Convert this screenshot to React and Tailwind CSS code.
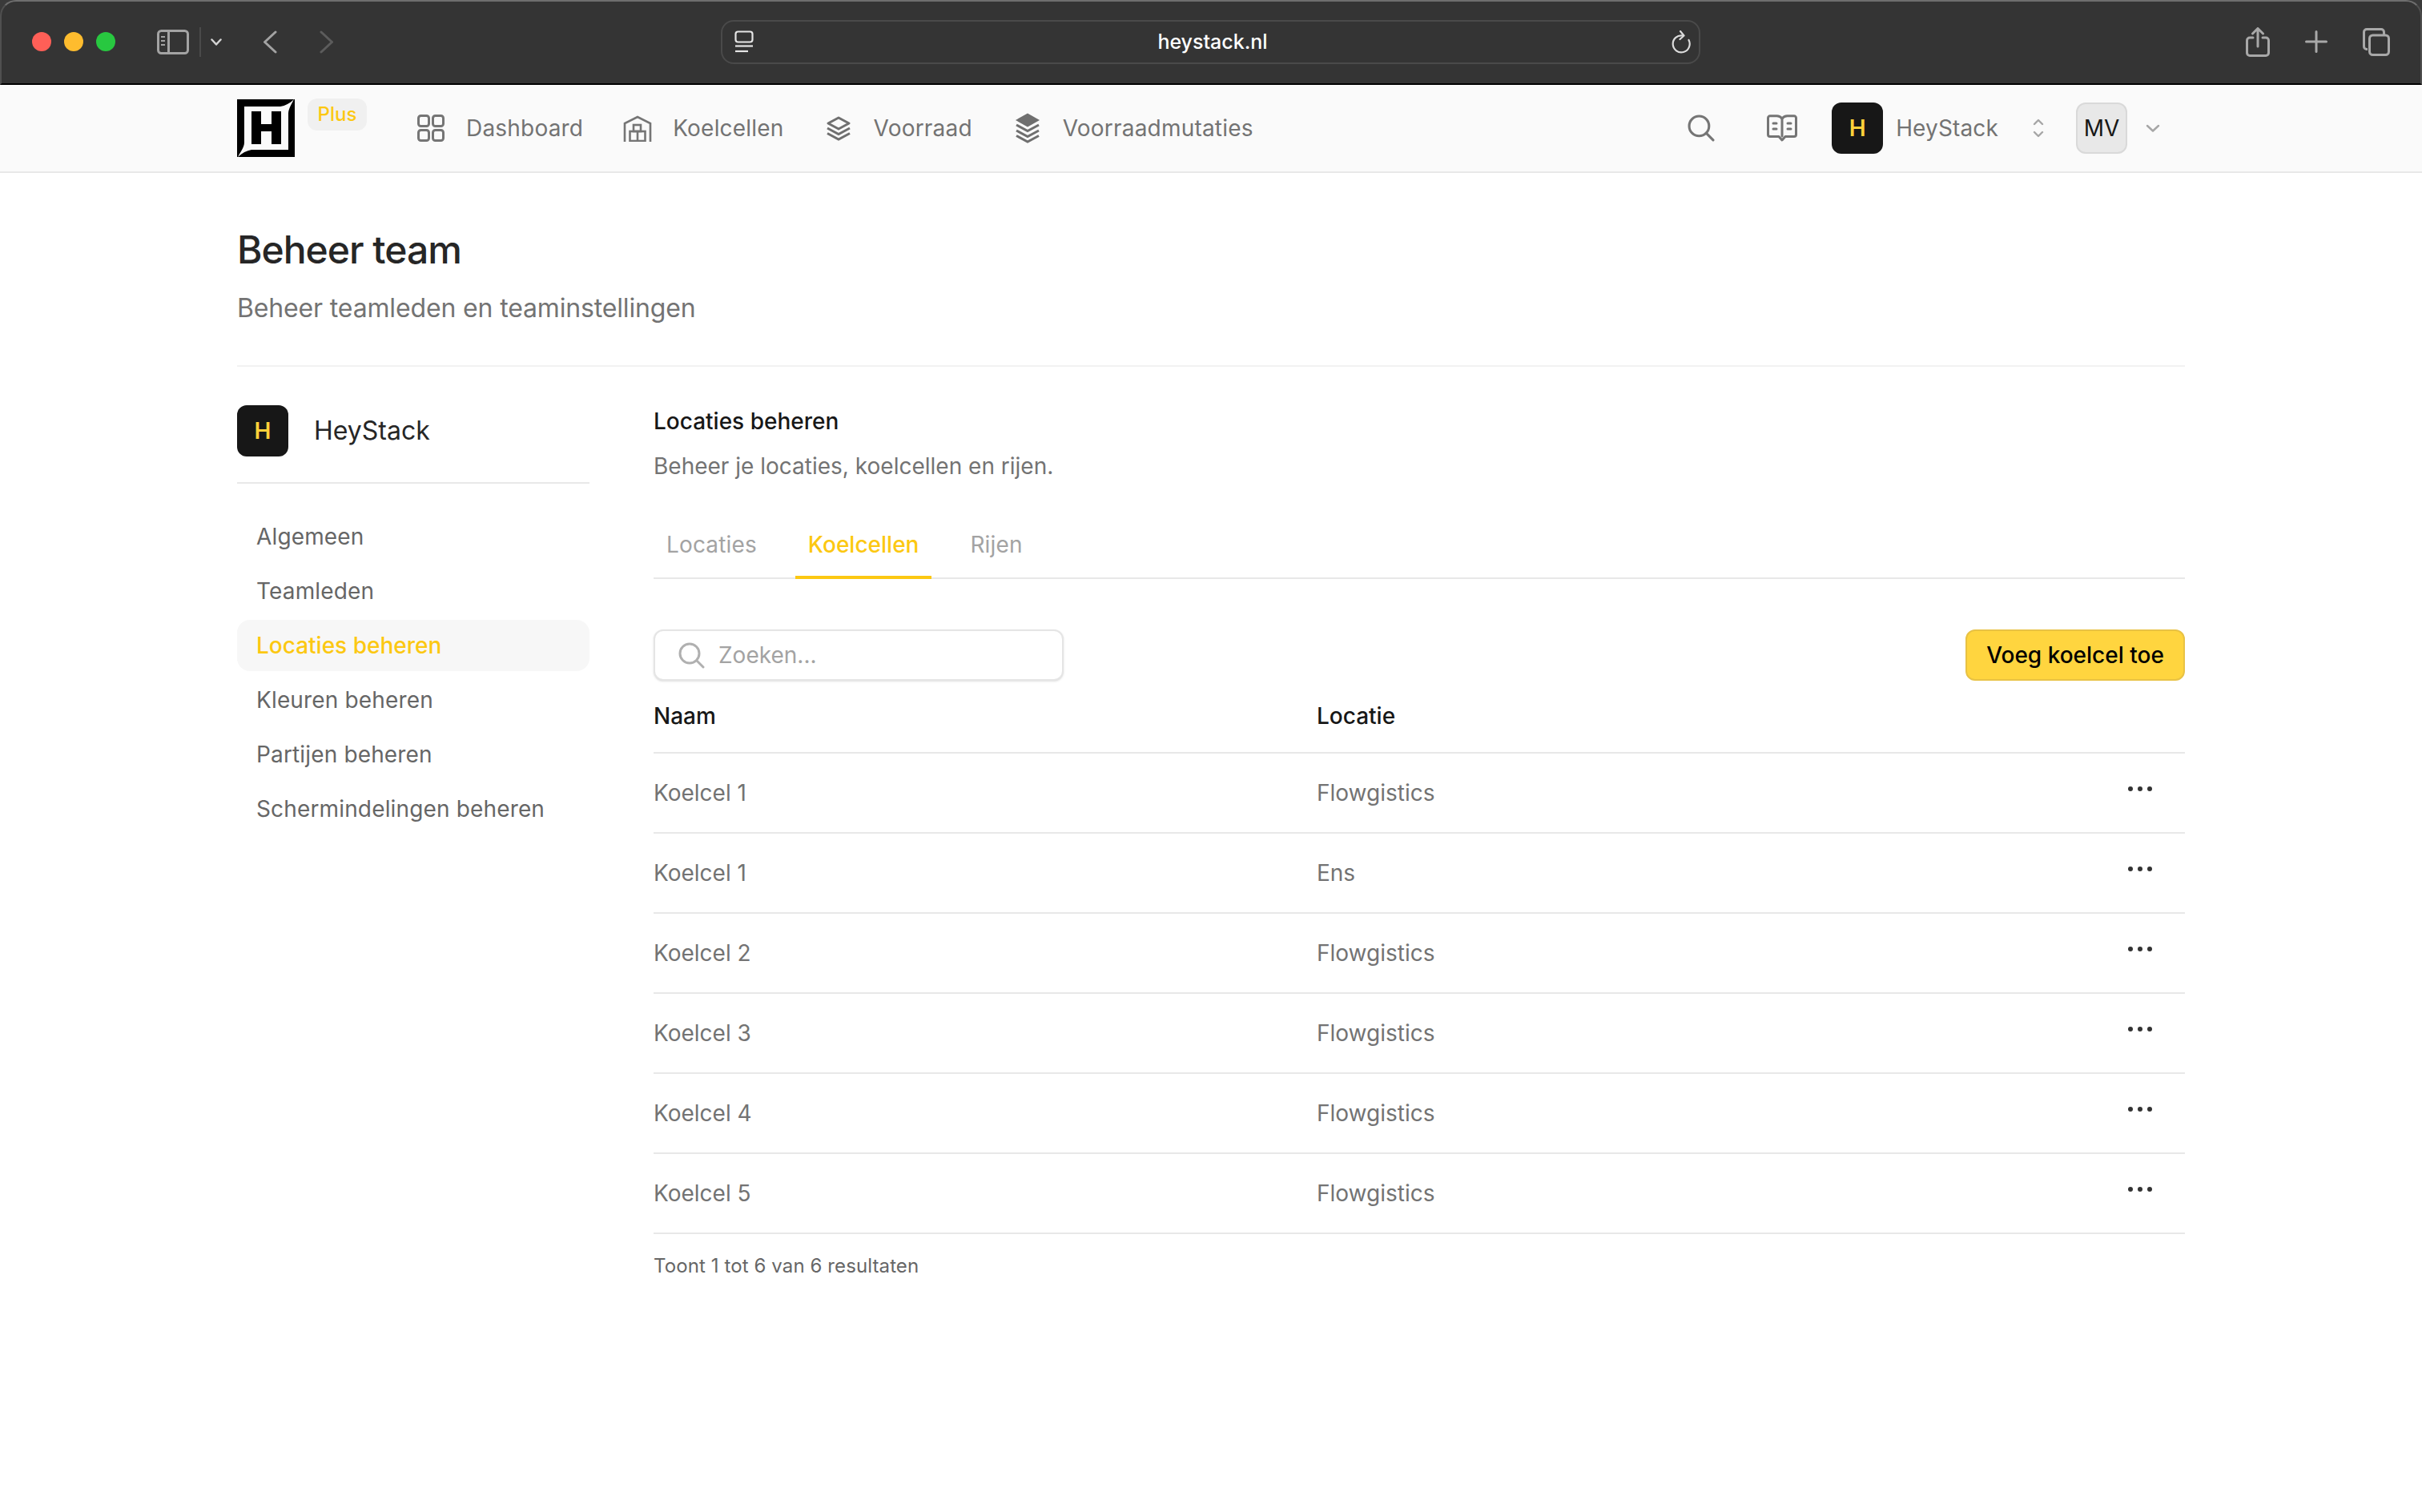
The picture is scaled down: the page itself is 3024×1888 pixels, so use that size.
import React from 'react';

const tableRows = [
    ['Koelcel 1', 'Flowgistics'],
    ['Koelcel 1', 'Ens'],
    ['Koelcel 2', 'Flowgistics'],
    ['Koelcel 3', 'Flowgistics'],
    ['Koelcel 4', 'Flowgistics'],
    ['Koelcel 5', 'Flowgistics'],
];

const sideLinks = ['Algemeen', 'Teamleden', 'Locaties beheren', 'Kleuren beheren', 'Partijen beheren', 'Schermindelingen beheren'];

function Logo() {
    return (
        <svg width="72" height="72" viewBox="0 0 72 72" className="shrink-0">
            <rect width="72" height="72" fill="#000" />
            <path d="M9 9H54C60 8 66 5 71 0C68 6 64 12 64 18V63H18C12 64 6 67 1 72C4 66 9 60 9 54Z" fill="#fafafa" />
            <path d="M18 15H30V31H43V15H55V56H43V40H30V56H18Z" fill="#000" />
        </svg>
    );
}

function GridIcon() {
    return (
        <svg width="34" height="34" viewBox="0 0 34 34" fill="none" stroke="#757575" strokeWidth="3">
            <rect x="1.5" y="1.5" width="13" height="13" rx="3" />
            <rect x="19.5" y="1.5" width="13" height="13" rx="3" />
            <rect x="1.5" y="19.5" width="13" height="13" rx="3" />
            <rect x="19.5" y="19.5" width="13" height="13" rx="3" />
        </svg>
    );
}

function WarehouseIcon() {
    return (
        <svg width="36" height="33" viewBox="0 0 36 33" fill="none" stroke="#757575" strokeWidth="2.6">
            <path d="M2 33V10L18 2L34 10V33" />
            <rect x="8.5" y="20" width="19" height="12" />
            <path d="M18 20V32" />
            <rect x="13" y="12" width="9" height="8" />
        </svg>
    );
}

function LayersIcon() {
    return (
        <svg width="32" height="31" viewBox="0 0 32 31" fill="none" stroke="#6f6f6f" strokeWidth="3">
            <path d="M16 2L29 9L16 16L3 9Z" strokeLinejoin="round" />
            <path d="M2 15L16 22.5L30 15" />
            <path d="M2 21.5L16 29L30 21.5" />
        </svg>
    );
}

function StackIcon() {
    return (
        <svg width="32" height="38" viewBox="0 0 32 38" fill="none" stroke="#6f6f6f" strokeWidth="3">
            <path d="M16 0.5L31 9L16 17.5L1 9Z" fill="#6f6f6f" stroke="none" />
            <path d="M2 15L16 22.5L30 15" />
            <path d="M2 22L16 29.5L30 22" />
            <path d="M2 28.5L16 36L30 28.5" />
        </svg>
    );
}

function SearchIcon({ color, size }) {
    return (
        <svg width={size} height={size} viewBox="0 0 33 33" fill="none" stroke={color} strokeWidth="3" strokeLinecap="round">
            <circle cx="14" cy="14" r="12" />
            <path d="M23 23L31 31" />
        </svg>
    );
}

function BookIcon() {
    return (
        <svg width="38" height="34" viewBox="0 0 38 34" fill="none" stroke="#757575" strokeWidth="3" strokeLinecap="round" strokeLinejoin="round">
            <path d="M19 5C17.5 3 15 1.8 12.5 1.8H4a2.5 2.5 0 0 0-2.5 2.5V25A2.5 2.5 0 0 0 4 27.5H15L19 32L23 27.5H34A2.5 2.5 0 0 0 36.5 25V4.300A2.500 2.500 0 0 0 34 1.800H25.500C23 1.800 20.500 3 19 5Z" />
            <path d="M19 5V27" />
            <path d="M8 11H12M8 18H12M26 11H30M26 18H30" />
        </svg>
    );
}

function UpDownIcon() {
    return (
        <svg width="14" height="24" viewBox="0 0 14 24" fill="none" stroke="#a6a6a6" strokeWidth="2.4" strokeLinecap="round" strokeLinejoin="round">
            <path d="M2 7L7 2L12 7" />
            <path d="M2 17L7 22L12 17" />
        </svg>
    );
}

function TrafficLights() {
    return (
        <div className="flex gap-4">
            <div className="w-6 h-6 rounded-full bg-[#ff5f57]" />
            <div className="w-6 h-6 rounded-full bg-[#febc2e]" />
            <div className="w-6 h-6 rounded-full bg-[#28c840]" />
        </div>
    );
}

function ChromeBar() {
    return (
        <div className="bg-[#3a3a3a]">
            <div className="h-[106px] flex items-center pb-[2px] pl-[38px] pr-[36px] bg-[#343434] rounded-t-[20px] border-t-2 border-x-2 border-t-[#6e6e6e] border-x-[#505050] border-b-2 border-b-black">
                <TrafficLights />

                {/* sidebar toggle */}
                <svg width="40" height="31" viewBox="0 0 40 31" fill="none" stroke="#a3a3a3" strokeWidth="3" className="ml-[52px]">
                    <rect x="1.500" y="1.500" width="37" height="28" rx="4" />
                    <path d="M14.500 2V29" />
                    <path d="M5 9H10M5 14H10M5 19H10" strokeWidth="2" />
                </svg>
                <div className="w-[2px] h-[37px] bg-[#4a4a4a] ml-[13px]" />
                <svg width="14" height="9" viewBox="0 0 14 9" fill="none" stroke="#d4d4d4" strokeWidth="2.500" strokeLinecap="round" strokeLinejoin="round" className="ml-[12px]">
                    <path d="M1.500 1.500L7 7.500L12.500 1.500" />
                </svg>

                {/* back / forward */}
                <svg width="18" height="29" viewBox="0 0 18 29" fill="none" stroke="#a3a3a3" strokeWidth="3" strokeLinecap="round" strokeLinejoin="round" className="ml-[51px]">
                    <path d="M16 2L2.500 14.500L16 27" />
                </svg>
                <svg width="18" height="29" viewBox="0 0 18 29" fill="none" stroke="#5c5c5c" strokeWidth="3" strokeLinecap="round" strokeLinejoin="round" className="ml-[53px]">
                    <path d="M2 2L15.500 14.500L2 27" />
                </svg>

                {/* address bar */}
                <div className="ml-[483px] w-[1223px] h-[55px] flex items-center pl-[15px] pr-[10px] rounded-[16px] border-2 border-[#4a4a4a]">
                    <svg width="24" height="28" viewBox="0 0 24 28" fill="none" stroke="#e5e5e5" strokeWidth="2.200">
                        <rect x="1.500" y="1.500" width="21" height="13" rx="3" />
                        <path d="M1 19.500H23" />
                        <path d="M1 26H17" />
                    </svg>
                    <div className="flex-1 text-center text-white text-[25px] leading-[34px] font-medium">heystack.nl</div>
                    <svg width="24" height="29" viewBox="0 0 24 29" fill="none" stroke="#dcdcdc" strokeWidth="2.200" strokeLinecap="round" strokeLinejoin="round">
                        <path d="M14 6.500A10.500 10.500 0 1 0 21.500 12" />
                        <path d="M11 1L15.500 6.500L10.500 11" />
                    </svg>
                </div>

                {/* share, new tab, tabs */}
                <svg width="30" height="37" viewBox="0 0 30 37" fill="none" stroke="#a8a8a8" strokeWidth="3" strokeLinecap="round" strokeLinejoin="round" className="ml-auto mr-[44px]">
                    <path d="M9 13H5A3.500 3.500 0 0 0 1.500 16.500V32A3.500 3.500 0 0 0 5 35.500H25A3.500 3.500 0 0 0 28.500 32V16.500A3.500 3.500 0 0 0 25 13H21" />
                    <path d="M15 24V2M8.500 8L15 1.500L21.500 8" />
                </svg>
                <svg width="28" height="28" viewBox="0 0 28 28" fill="none" stroke="#a8a8a8" strokeWidth="3" strokeLinecap="round" className="mr-[44px]">
                    <path d="M14 1.500V26.500M1.500 14H26.500" />
                </svg>
                <svg width="34" height="35" viewBox="0 0 34 35" fill="none" stroke="#a8a8a8" strokeWidth="3" className="mr-[2px]">
                    <path d="M6 26.500H5A3.500 3.500 0 0 1 1.500 23V5A3.500 3.500 0 0 1 5 1.500H23A3.500 3.500 0 0 1 26.500 5V8" />
                    <rect x="8.500" y="9" width="24" height="24.500" rx="4" />
                </svg>
            </div>
        </div>
    );
}

function NavItem({ icon, label, className }) {
    return (
        <a className={`flex items-center gap-[26px] text-[28px] leading-[40px] tracking-[0.2px] text-[#737373] ${className}`}>
            <span className="w-[36px] flex items-center justify-center">{icon}</span>
            {label}
        </a>
    );
}

function TopNav() {
    return (
        <div className="h-[110px] flex items-center px-[296px] bg-[#fafafa] border-b-2 border-[#e8e8e8]">
            <Logo />
            <span className="ml-4 mb-[34px] w-[74px] h-[40px] flex items-center justify-center rounded-[12px] bg-[#f0f0f0] text-[24px] font-medium text-[#fcc812]">Plus</span>

            <NavItem icon={<GridIcon />} label="Dashboard" className="ml-[62px]" />
            <NavItem icon={<WarehouseIcon />} label="Koelcellen" className="ml-[50px]" />
            <NavItem icon={<LayersIcon />} label="Voorraad" className="ml-[50px]" />
            <NavItem icon={<StackIcon />} label="Voorraadmutaties" className="ml-[51px]" />

            <div className="ml-auto flex items-center">
                <SearchIcon color="#757575" size={34} />
                <span className="ml-[65px]"><BookIcon /></span>
                <div className="ml-[43px] w-[64px] h-[64px] rounded-[12px] bg-[#171717] flex items-center justify-center text-[28px] font-semibold text-[#fdd13a]">H</div>
                <span className="ml-4 text-[28px] leading-[40px] tracking-[0.15px] text-[#737373]">HeyStack</span>
                <span className="ml-[43px]"><UpDownIcon /></span>
                <div className="ml-[40px] w-[64px] h-[64px] rounded-[12px] bg-[#e8e8e8] border-2 border-[#d9d9d9] flex items-center justify-center text-[28px] text-[#171717]">MV</div>
                <svg width="18" height="10" viewBox="0 0 18 10" fill="none" stroke="#a6a6a6" strokeWidth="2.400" strokeLinecap="round" strokeLinejoin="round" className="ml-[23px] mr-[31px]">
                    <path d="M2 2L9 8.500L16 2" />
                </svg>
            </div>
        </div>
    );
}

function Sidebar() {
    return (
        <div className="w-[440px] shrink-0">
            <div className="flex items-center gap-8 pb-8 border-b-2 border-[#e8e8e8]">
                <div className="w-[64px] h-[64px] rounded-[12px] bg-[#171717] flex items-center justify-center text-[28px] font-semibold text-[#fdd13a]">H</div>
                <span className="text-[32px] leading-[40px] text-[#262626]">HeyStack</span>
            </div>
            <div className="mt-[34px] flex flex-col gap-1">
                {sideLinks.map((link) => (
                    <a
                        key={link}
                        className={`h-[64px] pl-[24px] flex items-center rounded-[16px] text-[28px] ${link === 'Locaties beheren' ? 'bg-[#f7f7f7] font-medium text-[#fcc812]' : 'tracking-[0.15px] text-[#666666]'}`}
                    >
                        {link}
                    </a>
                ))}
            </div>
        </div>
    );
}

function MainPanel() {
    return (
        <div className="flex-1">
            <h2 className="text-[28px] leading-[40px] font-medium text-[#171717]">Locaties beheren</h2>
            <p className="mt-4 text-[28px] leading-[40px] text-[#737373]">Beheer je locaties, koelcellen en rijen.</p>

            {/* Tabs */}
            <div className="mt-[58px] flex gap-8 border-b-2 border-[#e8e8e8]">
                <span className="px-4 pb-[21px] text-[28px] leading-[40px] tracking-[0.15px] text-[#a3a3a3]">Locaties</span>
                <span className="px-4 pb-[19px] -mb-[2px] border-b-4 border-[#fcc812] text-[28px] leading-[40px] font-medium text-[#fcc812]">Koelcellen</span>
                <span className="px-4 pb-[21px] text-[28px] leading-[40px] tracking-[0.15px] text-[#a3a3a3]">Rijen</span>
            </div>

            {/* Search + add */}
            <div className="mt-[63px] flex items-center justify-between">
                <div className="w-[512px] h-[64px] flex items-center gap-[17px] pl-[29px] rounded-[12px] border-2 border-[#e5e5e5] bg-white shadow-sm">
                    <SearchIcon color="#b0b0b0" size={33} />
                    <span className="text-[28px] text-[#a3a3a3]">Zoeken...</span>
                </div>
                <button className="w-[274px] h-[64px] rounded-[12px] bg-[#ffd53f] border-2 border-[#e8c244] text-[28px] font-medium text-black">Voeg koelcel toe</button>
            </div>

            {/* Table */}
            <div className="mt-[24px] pb-[25px] grid grid-cols-[828px_1fr] border-b-2 border-[#e8e8e8] text-[28px] leading-[40px] font-medium text-[#171717]">
                <span>Naam</span>
                <span>Locatie</span>
            </div>
            {tableRows.map(([name, place], i) => (
                <div key={i} className="h-[100px] grid grid-cols-[828px_1fr_auto] items-center border-b-2 border-[#e8e8e8] text-[28px] text-[#737373]">
                    <span>{name}</span>
                    <span>{place}</span>
                    <span className="flex gap-[6px] pr-[41px] mb-[11px]">
                        <i className="w-[6px] h-[6px] rounded-full bg-[#333333]" />
                        <i className="w-[6px] h-[6px] rounded-full bg-[#333333]" />
                        <i className="w-[6px] h-[6px] rounded-full bg-[#333333]" />
                    </span>
                </div>
            ))}
            <p className="mt-[24px] text-[24px] leading-[32px] tracking-[0.1px] text-[#666666]">Toont 1 tot 6 van 6 resultaten</p>
        </div>
    );
}

export default function App() {
    return (
        <div className="min-h-screen bg-white font-['Inter',sans-serif]">
            <ChromeBar />
            <TopNav />
            <div className="px-[296px] pt-[68px]">
                <h1 className="text-[48px] leading-[56px] font-medium tracking-[-1px] text-[#262626]">Beheer team</h1>
                <p className="mt-[25px] text-[32px] leading-[40px] tracking-[-0.15px] text-[#737373]">Beheer teamleden en teaminstellingen</p>
                <div className="mt-[51px] border-b-2 border-[#f2f2f2]" />
                <div className="mt-[48px] flex gap-20">
                    <Sidebar />
                    <MainPanel />
                </div>
            </div>
        </div>
    );
}
